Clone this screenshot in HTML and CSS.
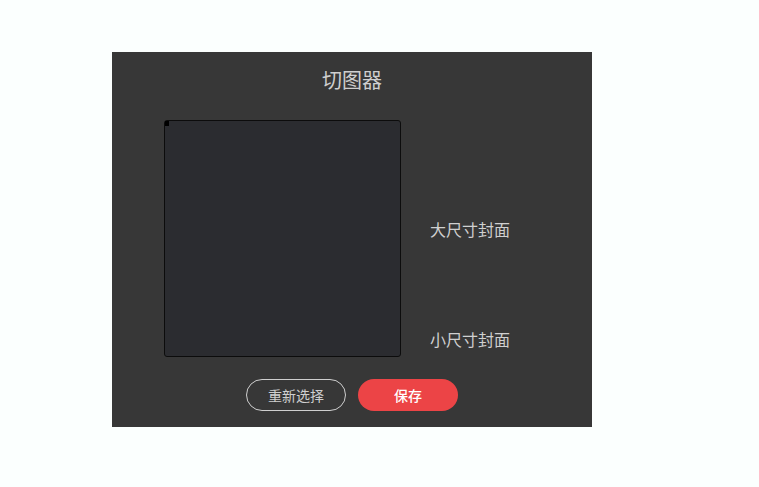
FILE: index.html
```html
<!DOCTYPE html>
<html lang="zh">
<head>
<meta charset="utf-8">
<link rel="stylesheet" href="styles.css">
</head>
<body>
<div class="panel">
  <div class="title">切图器</div>
  <div class="main">
    <div class="crop"><span class="handle"></span></div>
    <div class="previews">
      <div class="label">大尺寸封面</div>
      <div class="label">小尺寸封面</div>
    </div>
  </div>
  <div class="actions">
    <button class="btn btn-outline">重新选择</button>
    <button class="btn btn-primary">保存</button>
  </div>
</div>
</body>
</html>
```
FILE: styles.css
```css
html, body {
  margin: 0;
  padding: 0;
  background: #fbfffe;
  font-family: "Noto Sans CJK SC", "Liberation Sans", sans-serif;
}
.panel {
  margin: 52px 0 0 112px;
  width: 480px;
  height: 375px;
  background: #373737;
  box-sizing: border-box;
  padding-top: 14px;
}
.title {
  text-align: center;
  font-size: 20px;
  line-height: 28px;
  color: #cfcfcf;
}
.main {
  display: flex;
  margin-top: 26px;
  padding-left: 52px;
}
.crop {
  position: relative;
  width: 237px;
  height: 237px;
  box-sizing: border-box;
  border: 1px solid #0c0c0c;
  border-radius: 3px;
  background: #2b2c30;
}
.handle {
  position: absolute;
  top: 0;
  left: 0;
  width: 4px;
  height: 5px;
  background: #000;
}
.previews {
  display: flex;
  flex-direction: column;
  gap: 90px;
  margin-left: 29px;
  padding-top: 99px;
}
.label {
  font-size: 16px;
  line-height: 20px;
  color: #d0d0d0;
}
.actions {
  display: flex;
  justify-content: center;
  gap: 12px;
  margin-top: 22px;
}
.btn {
  width: 100px;
  height: 32px;
  border-radius: 16px;
  font-family: "Noto Sans CJK SC", "Liberation Sans", sans-serif;
  font-size: 14px;
  padding: 0;
  box-sizing: border-box;
}
.btn-outline {
  background: transparent;
  border: 1px solid #cfcfcf;
  color: #cfcfcf;
}
.btn-primary {
  background: #ec4446;
  border: none;
  color: #fff;
  font-weight: 500;
}
```
